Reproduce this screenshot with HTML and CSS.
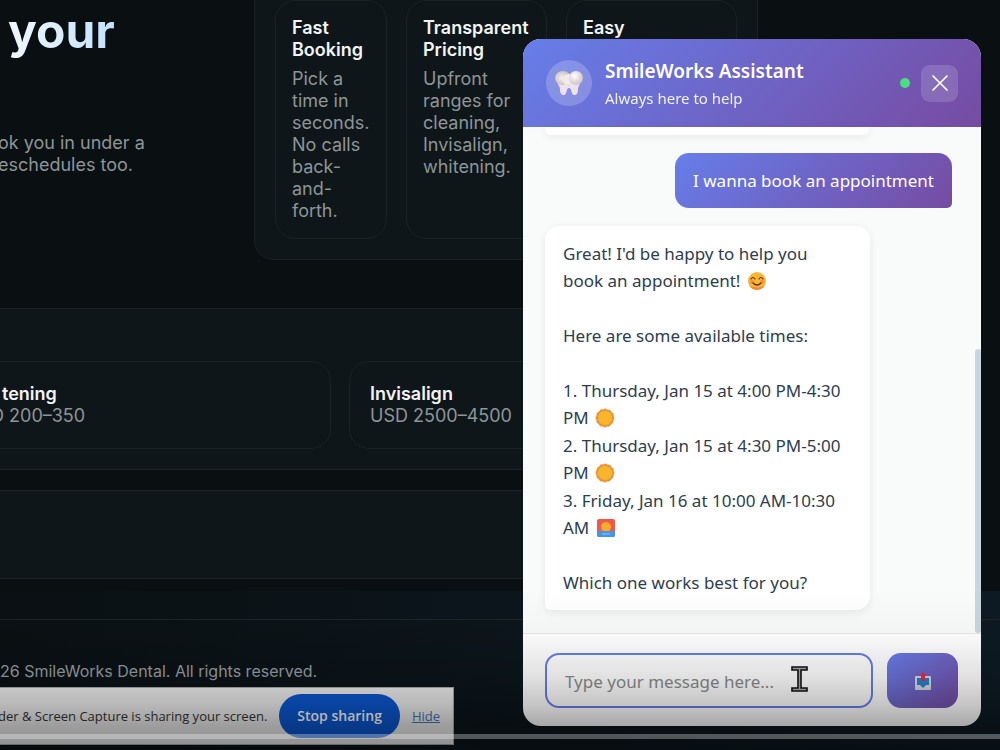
FILE: index.html
```
<!DOCTYPE html>
<html lang="en">
  <head>
    <meta charset="utf-8">
    <title>SmileWorks Dental</title>
    <link rel="stylesheet" href="styles.css">
  </head>
  <body>
    <main class="page">
      <section class="hero">
        <div class="intro">
          <h1>your</h1>
          <p>ok you in under a<br>eschedules too.</p>
        </div>
        <div class="panel features">
          <article class="card">
            <h2>Fast Booking</h2>
            <p>Pick a time in seconds. No calls back-and-forth.</p>
          </article>
          <article class="card">
            <h2>Transparent Pricing</h2>
            <p>Upfront ranges for cleaning, Invisalign, whitening.</p>
          </article>
          <article class="card">
            <h2>Easy</h2>
          </article>
        </div>
      </section>

      <section class="panel prices">
        <article class="card whitening">
          <h2>tening</h2>
          <p>D 200–350</p>
        </article>
        <article class="card">
          <h2>Invisalign</h2>
          <p>USD 2500–4500</p>
        </article>
      </section>

      <section class="panel blank"></section>
    </main>

    <footer class="footer">
      <p>26 SmileWorks Dental. All rights reserved.</p>
    </footer>

    <section class="chat">
      <header class="chat-header">
        <div class="avatar">
          <svg width="28" height="26" viewBox="0 0 28 26">
            <defs>
              <radialGradient id="crown-left" cx="0.45" cy="0.5" r="0.6">
                <stop offset="0" stop-color="#f6f2f0"/>
                <stop offset="1" stop-color="#c4bab6"/>
              </radialGradient>
              <radialGradient id="crown-right" cx="0.4" cy="0.35" r="0.7">
                <stop offset="0" stop-color="#ffffff"/>
                <stop offset="1" stop-color="#cbbdc0"/>
              </radialGradient>
            </defs>
            <path d="M2 10h24c0 4-3 6-3 9 0 4-1 6-4 6s-2-7-5-7-2 7-5 7-4-2-4-6c0-3-3-5-3-9z" fill="#eee2ea"/>
            <ellipse cx="8" cy="8" rx="8" ry="7" fill="url(#crown-left)"/>
            <ellipse cx="14" cy="10" rx="6" ry="6" fill="#f1ebee"/>
            <circle cx="21" cy="8" r="7" fill="url(#crown-right)"/>
            <path d="M12 14q2 3 4 0" fill="none" stroke="#dfd0dc" stroke-width="1"/>
          </svg>
        </div>
        <div class="chat-title">
          <h2>SmileWorks Assistant</h2>
          <p>Always here to help</p>
        </div>
        <span class="status"></span>
        <button class="close" type="button" aria-label="Close chat">
          <svg width="18" height="18" viewBox="0 0 18 18"><path d="M2 2l14 14M16 2L2 16" stroke="#fff" stroke-width="1.7" stroke-linecap="round"/></svg>
        </button>
      </header>

      <div class="messages">
        <div class="message bot previous"></div>
        <div class="message user">I wanna book an appointment</div>
        <div class="message bot">
          <p>Great! I'd be happy to help you book an appointment!
            <svg class="emoji" viewBox="0 0 20 20"><circle cx="10" cy="10" r="9" fill="#fbb534"/><path d="M2 14a9 9 0 0 0 16 0c-4 3-12 3-16 0z" fill="#f58a35"/><circle cx="5" cy="11" r="2" fill="#f8713c" opacity="0.6"/><circle cx="15" cy="11" r="2" fill="#f8713c" opacity="0.6"/><path d="M4 8q2-3 4 0M12 8q2-3 4 0M6 12q4 4 8 0" fill="none" stroke="#5b3418" stroke-width="1.2" stroke-linecap="round"/></svg>
          </p>
          <p>Here are some available times:</p>
          <ul>
            <li>1. Thursday, Jan 15 at 4:00 PM-4:30 PM <svg class="emoji" viewBox="0 0 20 20"><circle cx="10" cy="10" r="9" fill="#e9953a"/><circle cx="10" cy="10" r="8" fill="none" stroke="#e9953a" stroke-width="3" stroke-linecap="round" stroke-dasharray="0.1 4.09"/><circle cx="10" cy="10" r="7" fill="#f8b62c"/></svg></li>
            <li>2. Thursday, Jan 15 at 4:30 PM-5:00 PM <svg class="emoji" viewBox="0 0 20 20"><circle cx="10" cy="10" r="9" fill="#e9953a"/><circle cx="10" cy="10" r="8" fill="none" stroke="#e9953a" stroke-width="3" stroke-linecap="round" stroke-dasharray="0.1 4.09"/><circle cx="10" cy="10" r="7" fill="#f8b62c"/></svg></li>
            <li>3. Friday, Jan 16 at 10:00 AM-10:30 AM <svg class="emoji" viewBox="0 0 20 20"><rect x="1" y="1" width="18" height="18" rx="2" fill="#f0584a"/><circle cx="10" cy="9" r="5" fill="#fbab2c"/><path d="M1 13h18v4a2 2 0 0 1-2 2H3a2 2 0 0 1-2-2z" fill="#4594ea"/><path d="M6 16h8" stroke="#8fc4f6" stroke-width="1"/></svg></li>
          </ul>
          <p>Which one works best for you?</p>
        </div>
        <span class="scrollbar"></span>
      </div>

      <form class="composer">
        <input type="text" placeholder="Type your message here..." aria-label="Message">
        <button class="send" type="submit" aria-label="Send">
          <svg width="16" height="18" viewBox="0 0 16 18"><rect x="0" y="4" width="16" height="14" rx="1" fill="#d3d6e2"/><path d="M2 6h12v7h-3l-3 3-3-3H2z" fill="#2484c6"/><path d="M8 0l4 4h-2v5H6V4H4z" fill="#e42c54"/></svg>
        </button>
        <svg class="pointer" width="17" height="26" viewBox="0 0 17 26"><path d="M1 1h15v3h-6v18h6v3H1v-3h6V4H1z" fill="#a5a9a8" stroke="#111" stroke-width="1.6"/></svg>
      </form>
    </section>

    <aside class="share-bar">
      <p>der &amp; Screen Capture is sharing your screen.</p>
      <button type="button">Stop sharing</button>
      <a href="#">Hide</a>
    </aside>

    <div class="shade"></div>
    <div class="timeline"></div>
  </body>
</html>
```
FILE: styles.css
```
* { box-sizing: border-box; }
body { margin: 0; height: 100vh; overflow: hidden; position: relative; background: #0a0f12; color: #f2f4f5; font-family: Inter, sans-serif; font-size: 18px; line-height: 22px; }
h1, h2, p, ul { margin: 0; padding: 0; }
h2 { font-size: 18px; line-height: 22px; font-weight: 600; }
ul { list-style: none; }

.page { margin: -21px 242px 0 -20px; display: flex; flex-direction: column; }
.page p { color: #8d9598; }
.panel { background: #0f1619; border: 1px solid #1a2225; border-radius: 20px; }
.card { border: 1px solid #1a2225; border-radius: 20px; padding: 16px; }

.hero { display: flex; justify-content: space-between; margin-bottom: 48px; }
.intro { padding: 26px 0 0 18px; }
.intro h1 { padding: 0 0 75px 10px; font-size: 48px; line-height: 52px; font-weight: 700; background: linear-gradient(90deg, #f4faff, #b8dcff); background-clip: text; -webkit-background-clip: text; color: transparent; }
.features { width: 504px; padding: 20px; display: grid; grid-template-columns: 112px 141px 1fr; gap: 19px; }
.features h2 { margin-bottom: 7px; }

.prices { padding: 52px 20px 20px 0; display: grid; grid-template-columns: 350px 1fr; gap: 18px; margin-bottom: 20px; }
.prices .card { padding: 21px 20px; height: 88px; }
.whitening p { margin-left: -11px; }
.blank { height: 89px; }

.footer { margin-top: 12px; padding-top: 28px; font-size: 16px; background: linear-gradient(90deg, #0a1013, #0d1a23); }
.footer p { border-top: 1px solid #1d262b; padding: 40px 0 80px; color: #949da1; }

.chat { position: absolute; top: 39px; right: 19px; bottom: 24px; width: 458px; display: flex; flex-direction: column; overflow: hidden; border-radius: 18px; background: #fff; color: #2d3d4e; font-family: "Segoe UI", "Noto Sans", sans-serif; font-size: 17px; line-height: 27px; }
.chat-header { display: flex; align-items: center; height: 88px; padding: 0 23px; color: #fff; background: linear-gradient(135deg, #667eea, #764ba2); }
.avatar { width: 46px; height: 46px; border-radius: 50%; display: flex; align-items: center; justify-content: center; background: rgba(255, 255, 255, 0.2); }
.chat-title { flex: 1; padding: 4px 0 0 13px; }
.chat-title h2 { font-size: 19px; line-height: 27px; }
.chat-title p { font-size: 15px; line-height: 27px; opacity: 0.9; }
.status { width: 10px; height: 10px; border-radius: 50%; background: #4ade80; margin-right: 11px; }
.close { width: 37px; height: 37px; border: none; padding: 0; border-radius: 9px; display: flex; align-items: center; justify-content: center; background: rgba(255, 255, 255, 0.15); }

.messages { flex: 1; position: relative; display: flex; flex-direction: column; gap: 18px; padding: 0 29px 22px 22px; background: #f9fbfb; }
.message { border-radius: 14px; padding: 14px 18px; }
.bot { width: 325px; background: #fff; border-bottom-left-radius: 5px; box-shadow: 0 2px 8px rgba(0, 0, 0, 0.08); display: flex; flex-direction: column; gap: 28px; }
.previous { height: 8px; padding: 0; border-radius: 0 0 9px 5px; }
.bot ul { display: flex; flex-direction: column; gap: 1px; }
.user { align-self: flex-end; color: #fff; border-bottom-right-radius: 5px; background: linear-gradient(135deg, #667eea, #764ba2); }
.emoji { width: 20px; height: 20px; margin-left: 2px; vertical-align: -4px; }
.scrollbar { position: absolute; right: 0; bottom: 0; width: 6px; height: 284px; border-radius: 3px; background: #cbd5e1; }

.composer { position: relative; display: flex; gap: 14px; padding: 19px 23px 18px 22px; border-top: 1px solid #e5e9ec; }
.composer input { flex: 1; min-width: 0; height: 55px; padding: 2px 18px 0; border: 2px solid #667eea; border-radius: 14px; background: #fff; font: inherit; }
.composer input::placeholder { color: #8a8a8a; }
.send { width: 71px; height: 55px; border: none; border-radius: 14px; background: linear-gradient(135deg, #667eea, #764ba2); display: flex; align-items: center; justify-content: center; }
.pointer { position: absolute; left: 268px; top: 32px; }

.share-bar { position: absolute; left: 0; bottom: 5px; display: flex; align-items: center; height: 58px; padding-right: 13px; background: #eee; border: 1px solid #aaa; border-left: none; color: #333; font-family: "Segoe UI", "Open Sans", sans-serif; font-size: 13px; }
.share-bar p { margin-left: -2px; }
.share-bar button { height: 44px; margin: 0 12px; padding: 0 18px; border: none; border-radius: 22px; background: #0b57d0; color: #fff; font: inherit; font-size: 14px; font-weight: 600; }
.share-bar a { color: #3a76b8; }

.shade { position: absolute; left: 0; right: 0; bottom: 0; height: 160px; background: linear-gradient(rgba(0, 0, 0, 0), rgba(0, 0, 0, 0.03) 30%, rgba(0, 0, 0, 0.12) 55%, rgba(0, 0, 0, 0.23) 72%, rgba(0, 0, 0, 0.34) 85%, rgba(0, 0, 0, 0.4)); pointer-events: none; }
.timeline { position: absolute; left: 0; right: 0; bottom: 11px; height: 5px; background: rgba(255, 255, 255, 0.3); }
```
